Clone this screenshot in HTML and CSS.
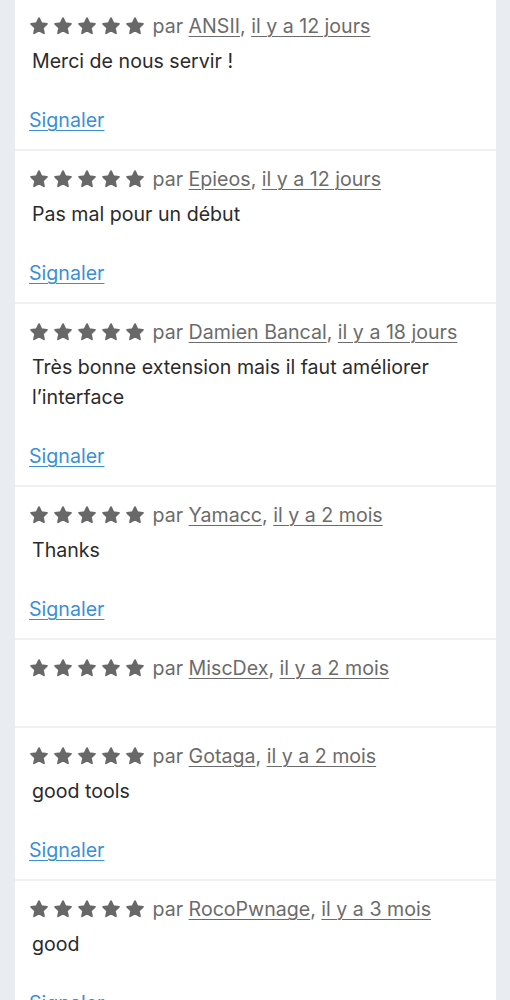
FILE: index.html
```html
<!DOCTYPE html>
<html lang="fr">
<head>
<meta charset="utf-8">
<title>Avis</title>
<link rel="stylesheet" href="styles.css">
</head>
<body>
<svg width="0" height="0" class="defs" aria-hidden="true">
  <defs>
    <symbol id="star" viewBox="0 0 24 24">
      <path d="M12 2.6l2.9 6.1 6.6.8-4.9 4.6 1.3 6.6L12 17.4l-5.9 3.3 1.3-6.6-4.9-4.6 6.6-.8z" fill="currentColor" stroke="currentColor" stroke-width="2.2" stroke-linejoin="round"/>
    </symbol>
  </defs>
</svg>
<main class="card">
  <article class="review">
    <div class="meta"><span class="stars"><svg><use href="#star"/></svg><svg><use href="#star"/></svg><svg><use href="#star"/></svg><svg><use href="#star"/></svg><svg><use href="#star"/></svg></span> par <a href="#">ANSII</a>, <a href="#">il y a 12 jours</a></div>
    <p class="body">Merci de nous servir !</p>
    <a class="report" href="#">Signaler</a>
  </article>
  <article class="review">
    <div class="meta"><span class="stars"><svg><use href="#star"/></svg><svg><use href="#star"/></svg><svg><use href="#star"/></svg><svg><use href="#star"/></svg><svg><use href="#star"/></svg></span> par <a href="#">Epieos</a>, <a href="#">il y a 12 jours</a></div>
    <p class="body">Pas mal pour un début</p>
    <a class="report" href="#">Signaler</a>
  </article>
  <article class="review">
    <div class="meta"><span class="stars"><svg><use href="#star"/></svg><svg><use href="#star"/></svg><svg><use href="#star"/></svg><svg><use href="#star"/></svg><svg><use href="#star"/></svg></span> par <a href="#">Damien Bancal</a>, <a href="#">il y a 18 jours</a></div>
    <p class="body">Très bonne extension mais il faut améliorer l’interface</p>
    <a class="report" href="#">Signaler</a>
  </article>
  <article class="review">
    <div class="meta"><span class="stars"><svg><use href="#star"/></svg><svg><use href="#star"/></svg><svg><use href="#star"/></svg><svg><use href="#star"/></svg><svg><use href="#star"/></svg></span> par <a href="#">Yamacc</a>, <a href="#">il y a 2 mois</a></div>
    <p class="body">Thanks</p>
    <a class="report" href="#">Signaler</a>
  </article>
  <article class="review review-empty">
    <div class="meta"><span class="stars"><svg><use href="#star"/></svg><svg><use href="#star"/></svg><svg><use href="#star"/></svg><svg><use href="#star"/></svg><svg><use href="#star"/></svg></span> par <a href="#">MiscDex</a>, <a href="#">il y a 2 mois</a></div>
    <p class="body"></p>
  </article>
  <article class="review">
    <div class="meta"><span class="stars"><svg><use href="#star"/></svg><svg><use href="#star"/></svg><svg><use href="#star"/></svg><svg><use href="#star"/></svg><svg><use href="#star"/></svg></span> par <a href="#">Gotaga</a>, <a href="#">il y a 2 mois</a></div>
    <p class="body">good tools</p>
    <a class="report" href="#">Signaler</a>
  </article>
  <article class="review">
    <div class="meta"><span class="stars"><svg><use href="#star"/></svg><svg><use href="#star"/></svg><svg><use href="#star"/></svg><svg><use href="#star"/></svg><svg><use href="#star"/></svg></span> par <a href="#">RocoPwnage</a>, <a href="#">il y a 3 mois</a></div>
    <p class="body">good</p>
    <a class="report" href="#">Signaler</a>
  </article>
</main>
</body>
</html>
```
FILE: styles.css
```css
html, body {
  margin: 0;
  padding: 0;
  background: #e9ecf0;
}
body {
  font-family: Inter, "Noto Sans", sans-serif;
  font-size: 19.6px;
  color: #2b2b2b;
}
.defs {
  position: absolute;
  width: 0;
  height: 0;
}
.card {
  margin: -2px 14px 0 15px;
  background: #fff;
}
.review {
  display: flex;
  flex-direction: column;
  align-items: flex-start;
  padding: 13px 14px 14px 14px;
  border-bottom: 2px solid #eff0f2;
}
.meta {
  display: flex;
  align-items: center;
  line-height: 30px;
  color: #6b6b6b;
  white-space: pre;
}
.meta a {
  color: #6b6b6b;
  text-decoration: underline;
  text-underline-offset: 3px;
  text-decoration-thickness: 1px;
}
.stars {
  display: flex;
  gap: 4px;
  margin-right: 2px;
  color: #686868;
}
.stars svg {
  width: 20px;
  height: 20px;
}
.body {
  margin: 5px 0 0 3px;
  line-height: 30px;
  min-height: 24px;
}
.report {
  margin-top: 29px;
  line-height: 30px;
  color: #3a8fd6;
  text-decoration: underline;
  text-underline-offset: 3px;
  text-decoration-thickness: 1px;
}
```
